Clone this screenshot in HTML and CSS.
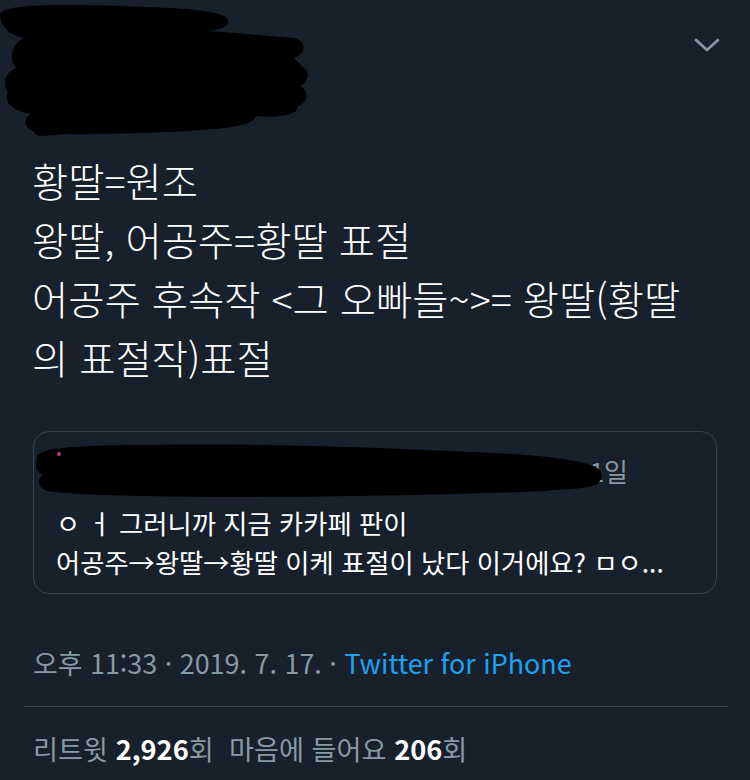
FILE: index.html
```html
<!DOCTYPE html>
<html lang="ko">
<head>
<meta charset="utf-8">
<link rel="stylesheet" href="styles.css">
</head>
<body>
<div class="tweet">
  <div class="header">
    <svg class="redact" width="320" height="150" viewBox="0 0 320 150">
      <path fill="#000" d="M0 14 C2 4 60 4 120 6 C180 8 226 10 228 20 C230 26 222 29 210 31 L294 38 C308 42 306 54 294 58 L302 66 C312 72 308 82 300 86 C310 92 308 102 298 106 C298 116 276 118 256 116 C254 124 236 128 200 130 C140 134 60 136 36 132 C22 128 24 118 30 114 C10 110 3 100 8 92 C2 84 5 72 16 68 C8 58 12 44 24 38 C6 34 0 24 0 14 Z"/>
      <path fill="#000" d="M40 130 C100 126 180 120 240 118" stroke="#000" stroke-width="12" stroke-linecap="round"/>
    </svg>
    <svg class="chevron" width="28" height="16" viewBox="0 0 28 16">
      <path d="M3 3 L14 13 L25 3" stroke="#8899a6" stroke-width="2.6" fill="none" stroke-linecap="round" stroke-linejoin="round"/>
    </svg>
  </div>
  <div class="text">황딸=원조<br>왕딸, 어공주=황딸 표절<br>어공주 후속작 &lt;그 오빠들~&gt;= 왕딸(황딸<br>의 표절작)표절</div>
  <div class="quote">
    <div class="quote-head">
      <span class="q-time">1일</span>
      <svg class="q-redact" width="600" height="80" viewBox="0 0 600 80">
        <path fill="#000" d="M4 28 C2 18 30 14 120 14 C250 12 380 18 460 22 C510 24 552 30 562 36 C572 40 570 50 562 54 C552 58 530 58 510 60 C420 64 300 66 200 66 C120 66 40 64 14 60 C4 56 4 48 10 44 C2 40 2 32 4 28 Z"/>
        <circle cx="26" cy="23" r="2" fill="#b0407a"/>
      </svg>
    </div>
    <div class="q-text">ㅇ ㅓ 그러니까 지금 카카페 판이<br>어공주→왕딸→황딸 이케 표절이 났다 이거에요? ㅁㅇ...</div>
  </div>
  <div class="meta">오후 11:33 · 2019. 7. 17. · <span class="source">Twitter for iPhone</span></div>
  <div class="divider"></div>
  <div class="stats">리트윗 <span class="num">2,926</span>회 &nbsp;마음에 들어요 <span class="num">206</span>회</div>
</div>
</body>
</html>
```

FILE: styles.css
```css
html, body {
  margin: 0;
  padding: 0;
  background: #17202b;
}
body {
  width: 750px;
  height: 780px;
  overflow: hidden;
  font-family: "Noto Sans CJK KR", "Noto Sans", sans-serif;
  color: #ffffff;
}
.tweet {
  display: flex;
  flex-direction: column;
}
.header {
  height: 150px;
  display: flex;
  justify-content: space-between;
  align-items: flex-start;
}
.redact {
  display: block;
}
.chevron {
  margin-top: 37px;
  margin-right: 29px;
}
.text {
  padding-left: 32px;
  font-size: 39.4px;
  line-height: 59px;
  font-weight: 300;
}
.quote {
  margin: 45px 33px 0 33px;
  height: 163px;
  box-sizing: border-box;
  border: 1px solid #38444d;
  border-radius: 16px;
  padding: 12px 20px 0 22px;
}
.quote-head {
  position: relative;
  height: 59px;
  display: flex;
  justify-content: flex-end;
  align-items: center;
}
.q-time {
  color: #8899a6;
  font-size: 26px;
  margin-right: 68px;
  margin-bottom: 6px;
}
.q-redact {
  position: absolute;
  left: -23px;
  top: -13px;
}
.q-text {
  font-size: 26.3px;
  line-height: 39px;
}
.meta {
  margin-top: 49px;
  padding-left: 33px;
  font-size: 26.9px;
  line-height: 40px;
  color: #8899a6;
}
.source {
  color: #1da1f2;
}
.divider {
  margin: 23px 22px 0 24px;
  height: 1px;
  background: #38444d;
}
.stats {
  margin-top: 21px;
  padding-left: 33px;
  font-size: 27.2px;
  line-height: 40px;
  color: #8899a6;
}
.num {
  color: #ffffff;
  font-weight: 700;
}
```
